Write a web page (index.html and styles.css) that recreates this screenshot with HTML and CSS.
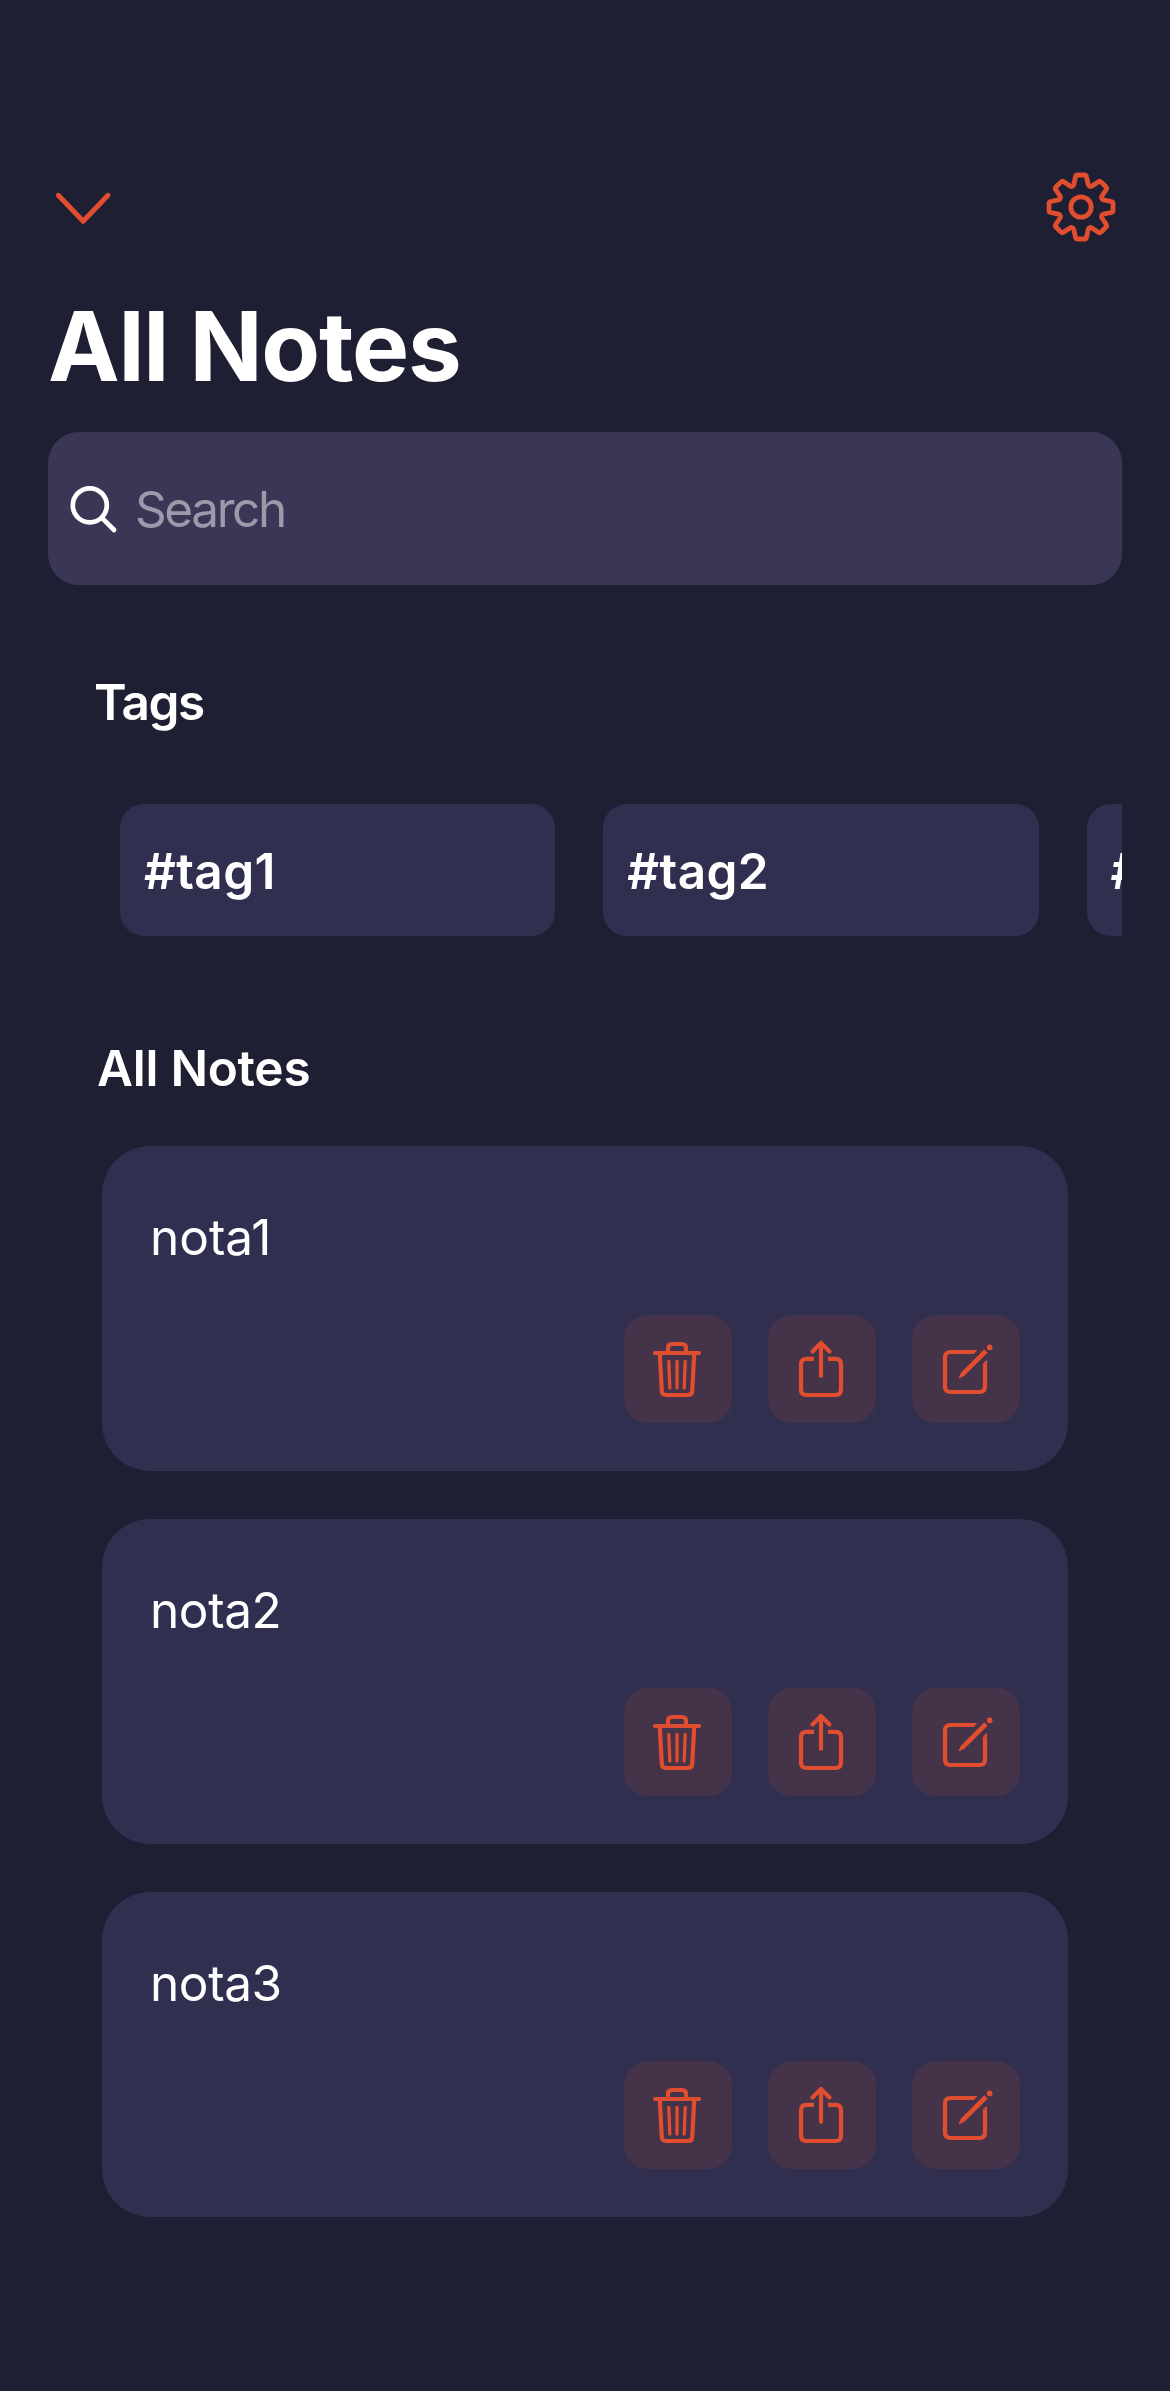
FILE: index.html
```html
<!DOCTYPE html>
<html lang="en">
<head>
<meta charset="utf-8">
<title>All Notes</title>
<link rel="stylesheet" href="styles.css">
</head>
<body>
<svg class="sprite" aria-hidden="true">
  <symbol id="trash" viewBox="0 0 108 108">
    <path d="M44 37v-4q0-4 4-4h10q4 0 4 4v4M31 38h44"/>
    <path d="M35.8 39l2 37q.3 4 4.200 4h22q3.900 0 4.200-4l2-37"/>
    <path class="thin" d="M44.800 46.500l1 26.500M53 46.500v26.500M61.200 46.500l-1 26.500"/>
  </symbol>
  <symbol id="share" viewBox="0 0 108 108">
    <path class="butt" d="M46 43.800h-7.500q-5.500 0-5.500 5.500v25.200q0 5.500 5.500 5.500h29q5.500 0 5.500-5.500v-25.200q0-5.500-5.500-5.500h-7.500"/>
    <path d="M53 28v32.800M44.500 36.500l8.500-8.500 8.500 8.500"/>
  </symbol>
  <symbol id="edit" viewBox="0 0 108 108">
    <path class="butt" d="M62 37h-23.500q-5.500 0-5.500 5.500v29q0 5.500 5.500 5.500h29q5.500 0 5.500-5.500v-23.200"/>
    <path class="solid" d="M62 35h3.300l-3.300 4zM71 48.300l4-3.600v3.600z"/>
    <path class="solid" d="M72.300 34.300l3.400 3.400L52.600 60.500 47.500 63.200q-1 .1-.7-.8l2.500-5.200z"/>
    <circle class="solid" cx="77.700" cy="32.400" r="2.800"/>
  </symbol>
</svg>
<main class="screen">
  <header class="topbar">
    <svg class="icon" width="70" height="70" viewBox="48 172 70 70"><path d="M58.300 195.300l24.900 26 24.800-26"/></svg>
    <svg class="icon gear" width="72" height="72" viewBox="-36 -36 72 72">
      <path d="M-3.500-32h7q1.700 0 2 1.700l1.700 7.800q.3 1.300 1.500 1.800q1.200.5 2.300-.2l6.100-4.200q1.700-1.200 3.100.2l4.700 4.700q1.400 1.400.2 3.100l-4.200 6.100q-.7 1.100-.2 2.300q.5 1.200 1.800 1.500l7.800 1.700q1.700.3 1.700 2v7q0 1.700-1.700 2l-7.800 1.700q-1.300.3-1.800 1.500q-.5 1.200.2 2.300l4.200 6.100q1.200 1.700-.2 3.100l-4.700 4.700q-1.400 1.400-3.100.2l-6.100-4.200q-1.100-.7-2.300-.2q-1.200.5-1.500 1.800l-1.700 7.800q-.3 1.700-2 1.700h-7q-1.700 0-2-1.700l-1.700-7.800q-.3-1.300-1.500-1.800q-1.200-.5-2.300.2l-6.100 4.200q-1.700 1.200-3.100-.2l-4.700-4.700q-1.400-1.400-.2-3.100l4.200-6.100q.7-1.100.2-2.300q-.5-1.200-1.800-1.500l-7.800-1.700q-1.700-.3-1.700-2v-7q0-1.700 1.700-2l7.800-1.700q1.300-.3 1.800-1.500q.5-1.200-.2-2.300l-4.200-6.100q-1.200-1.700.2-3.100l4.700-4.700q1.400-1.400 3.100-.2l6.100 4.200q1.100.7 2.300.2q1.200-.5 1.500-1.800l1.700-7.800q.3-1.700 2-1.700z"/>
      <circle r="10.200"/>
    </svg>
  </header>
  <h1 class="title">All Notes</h1>
  <div class="search">
    <svg class="search-icon" width="50" height="50" viewBox="68 483 50 50"><circle cx="89.800" cy="504.300" r="17"/><path d="M102.500 517.300l11.600 11.700"/></svg>
    <span class="placeholder">Search</span>
  </div>
  <h2 class="heading tags-heading">Tags</h2>
  <div class="tags">
    <div class="tag">#tag1</div>
    <div class="tag">#tag2</div>
    <div class="tag">#tag3</div>
  </div>
  <h2 class="heading notes-heading">All Notes</h2>
  <section class="notes">
    <article class="note">
      <p class="note-name">nota1</p>
      <div class="actions">
        <svg class="action"><use href="#trash"/></svg>
        <svg class="action"><use href="#share"/></svg>
        <svg class="action"><use href="#edit"/></svg>
      </div>
    </article>
    <article class="note">
      <p class="note-name">nota2</p>
      <div class="actions">
        <svg class="action"><use href="#trash"/></svg>
        <svg class="action"><use href="#share"/></svg>
        <svg class="action"><use href="#edit"/></svg>
      </div>
    </article>
    <article class="note">
      <p class="note-name">nota3</p>
      <div class="actions">
        <svg class="action"><use href="#trash"/></svg>
        <svg class="action"><use href="#share"/></svg>
        <svg class="action"><use href="#edit"/></svg>
      </div>
    </article>
  </section>
</main>
</body>
</html>
```
FILE: styles.css
```css
* { box-sizing: border-box; margin: 0; padding: 0; }
body {
  background: #1f1f33;
  color: #fff;
  font-family: Inter, "Liberation Sans", sans-serif;
  font-size: 49.5px;
  line-height: 60px;
}
.sprite { display: none; }
.screen {
  width: 1170px;
  height: 2391px;
  padding: 171px 48px 0;
  overflow: hidden;
}
.topbar {
  display: flex;
  justify-content: space-between;
  height: 72px;
  padding-right: 5px;
}
.icon {
  fill: none;
  stroke: #e04e2f;
  stroke-width: 5;
  stroke-linecap: round;
  stroke-linejoin: round;
}
.icon:first-child { margin-top: 1px; }
.gear { stroke-width: 4.8; }
.title {
  margin-top: 43px;
  font-size: 96px;
  font-weight: 700;
  line-height: 120px;
  letter-spacing: -1.25px;
}
.search {
  display: flex;
  align-items: center;
  height: 153px;
  margin-top: 26px;
  padding-left: 20px;
  border-radius: 31px;
  background: #393755;
}
.search-icon {
  fill: none;
  stroke: #fff;
  stroke-width: 4.7;
  stroke-linecap: round;
}
.placeholder {
  margin-left: 17px;
  color: #9b99aa;
  letter-spacing: -2.4px;
}
.heading { font-size: 49.5px; font-weight: 600; line-height: 60px; }
.tags-heading { margin: 87px 0 0 46px; letter-spacing: -1.5px; }
.tags {
  display: flex;
  gap: 48px;
  margin-top: 72px;
  padding-left: 72px;
  overflow: hidden;
}
.tag {
  flex: 0 0 435.3px;
  height: 132px;
  padding: 37px 24px 0;
  border-radius: 24px;
  background: #312f50;
  font-weight: 600;
  letter-spacing: 0.4px;
}
.notes-heading { margin: 102px 0 0 49px; letter-spacing: -0.25px; }
.notes {
  display: flex;
  flex-direction: column;
  gap: 48px;
  margin: 48px 54px 0;
}
.note {
  display: flex;
  flex-direction: column;
  justify-content: space-between;
  height: 325px;
  padding: 61px 48px 48px;
  border-radius: 48px;
  background: #312f50;
}
.note-name { letter-spacing: -0.4px; }
.note:first-child .note-name { letter-spacing: 0; }
.actions { display: flex; justify-content: flex-end; gap: 36px; }
.action {
  width: 108px;
  height: 108px;
  border-radius: 24px;
  background: #453349;
  fill: none;
  stroke: #e04e2f;
  stroke-width: 4.2;
  stroke-linecap: round;
  stroke-linejoin: round;
}
.thin { stroke-width: 3.3; }
.butt { stroke-linecap: butt; }
.solid { fill: #e04e2f; stroke: none; }
```
